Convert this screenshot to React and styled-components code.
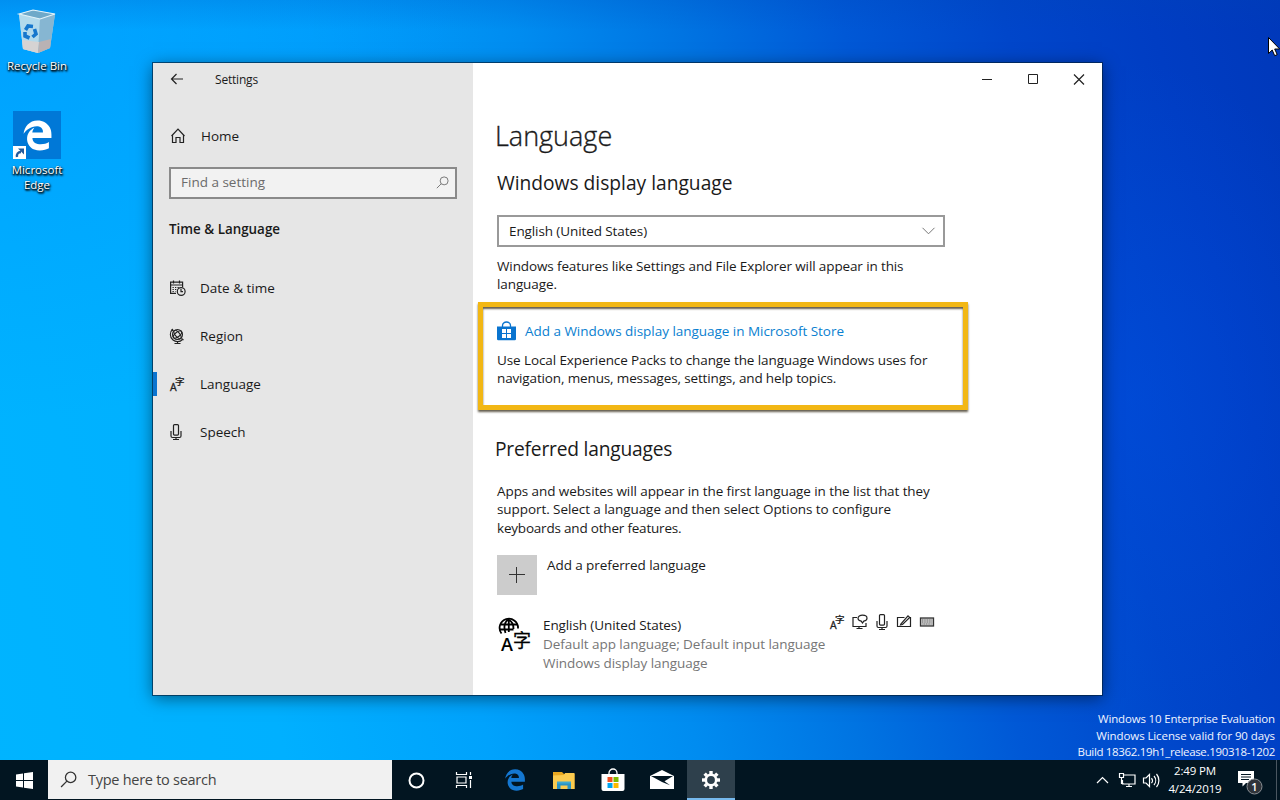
import React from 'react'
import styled, { createGlobalStyle } from 'styled-components'
import { FaEdgeLegacy } from 'react-icons/fa'

const GlobalStyle = createGlobalStyle`
  * {
    box-sizing: border-box;
  }

  body {
    margin: 0;
    overflow: hidden;
    font-family: 'Open Sans', 'Noto Sans', 'Noto Sans CJK SC', sans-serif;
    font-size: 13.5px;
    color: #1a1a1a;
  }

  h1, h2, h3, p {
    margin: 0;
    font-weight: 400;
  }

  svg {
    display: block;
    flex: none;
    overflow: visible;
  }
`

const Desktop = styled.div`
  position: relative;
  display: flex;
  flex-direction: column;
  width: 1280px;
  height: 800px;
  overflow: hidden;
  background:
    linear-gradient(180deg, rgba(0, 70, 180, 0.18) 0, rgba(0, 70, 180, 0) 30px),
    radial-gradient(ellipse 500px 420px at 0 0, rgba(0, 140, 255, 0.45), rgba(0, 140, 255, 0)),
    radial-gradient(ellipse 240px 340px at 1130px 400px, rgba(0, 82, 232, 0.4), rgba(0, 82, 232, 0)),
    linear-gradient(76deg, #00b4ff 0%, #00b0ff 20%, #00a2fc 34%, #008cf0 48%, #0074e2 59%, #0058d6 70%, #0046ca 81%, #003dc3 91%, #0038ba 100%);
`

const Shortcuts = styled.div`
  flex: 1;
  display: flex;
  flex-direction: column;
  align-items: flex-start;
`

const Shortcut = styled.div`
  display: flex;
  flex-direction: column;
  align-items: center;
  width: 74px;
  height: ${({ $height }) => $height}px;
  padding-top: ${({ $top }) => $top}px;
  color: #fff;
  font-size: 11.5px;
  line-height: 15px;
  text-align: center;
  text-shadow: 1px 1px 2px #000, 0 1px 2px #000, 1px 2px 2px rgba(0, 0, 0, 0.6);
`

const ShortcutLabel = styled.span`
  width: 64px;
  margin-top: ${({ $gap }) => $gap}px;
  white-space: ${({ $nowrap }) => ($nowrap ? 'nowrap' : 'normal')};
`

const EdgeTile = styled.div`
  position: relative;
  display: flex;
  align-items: center;
  justify-content: center;
  width: 48px;
  height: 48px;
  background: #0078d7;
  color: #fff;
`

const ShortcutArrow = styled.svg`
  position: absolute;
  left: 0;
  bottom: 0;
`

const Window = styled.div`
  position: absolute;
  left: 153px;
  top: 63px;
  display: grid;
  grid-template-columns: 320px 1fr;
  width: 949px;
  height: 632px;
  background: #fff;
  box-shadow: 0 0 0 1px rgba(0, 30, 60, 0.65), 0 3px 16px rgba(0, 0, 0, 0.5);
`

const Sidebar = styled.aside`
  background: #e6e6e6;
`

const TitleBar = styled.div`
  display: flex;
  align-items: center;
  justify-content: ${({ $end }) => ($end ? 'flex-end' : 'flex-start')};
  height: 33px;
  padding-left: ${({ $end }) => ($end ? 0 : 17)}px;
  font-size: 12px;
`

const TitleText = styled.span`
  margin-left: 31px;
  letter-spacing: -0.2px;
`

const CaptionButton = styled.div`
  display: flex;
  align-items: center;
  justify-content: center;
  width: 46px;
  height: 32px;
`

const HomeRow = styled.div`
  display: flex;
  align-items: center;
  gap: 14px;
  height: 48px;
  margin-top: 16px;
  padding-left: 17px;
`

const SearchBox = styled.div`
  display: flex;
  align-items: center;
  justify-content: space-between;
  width: 288px;
  height: 32px;
  margin: 7px 0 0 16px;
  padding: 0 6px 2px 10px;
  border: 2px solid #8a8a8a;
  background: #f2f2f2;
  color: #6b6b6b;
`

const SectionTitle = styled.h3`
  margin: 20px 0 25px 16px;
  font-size: 13.4px;
  font-weight: 600;
  line-height: 20px;
`

const NavItem = styled.div`
  display: flex;
  align-items: center;
  gap: 14px;
  height: 48px;
  padding-left: ${({ $active }) => ($active ? 12 : 16)}px;

  &::before {
    content: '';
    display: ${({ $active }) => ($active ? 'block' : 'none')};
    width: 4px;
    height: 24px;
    margin: 0 -2px 0 -12px;
    background: #0a74cf;
  }
`

const NavIcon = styled.span`
  width: 17px;
`

const Main = styled.main`
  display: flex;
  flex-direction: column;
`

const Content = styled.div`
  padding: 19px 0 0 24px;
`

const PageTitle = styled.h1`
  margin-left: -2px;
  font-size: 27px;
  font-weight: 300;
  line-height: 41px;
  -webkit-text-stroke: 0.35px #1a1a1a;
`

const Subtitle = styled.h2`
  margin: ${({ $margin }) => $margin};
  font-size: 19.2px;
  line-height: 28px;
  letter-spacing: ${({ $spacing }) => $spacing || 0}px;
`

const Select = styled.div`
  display: flex;
  align-items: center;
  justify-content: space-between;
  width: 448px;
  height: 32px;
  margin-bottom: 10px;
  padding: 0 8px 0 10px;
  border: 2px solid #999;
  letter-spacing: -0.1px;
`

const Line = styled.p`
  line-height: 18.4px;
  white-space: nowrap;
  letter-spacing: ${({ $spacing = -0.1 }) => $spacing}px;
`

const Highlight = styled.section`
  width: 490px;
  height: 108px;
  margin: 8px 0 0 -19px;
  padding: 14px 0 0 14px;
  border: 5px solid #f2b714;
  box-shadow: 0 2px 2px rgba(50, 40, 20, 0.75), inset 0 2px 2px rgba(50, 40, 20, 0.75);
`

const StoreLink = styled.div`
  display: flex;
  align-items: center;
  gap: 9px;
  height: 20px;
  margin-bottom: 10px;
  color: #0a80d0;
  letter-spacing: -0.03px;
`

const AddRow = styled.div`
  display: flex;
  gap: 10px;
  margin-top: 18px;
`

const AddTile = styled.div`
  display: flex;
  align-items: center;
  justify-content: center;
  width: 40px;
  height: 40px;
  background: #ccc;
`

const AddLabel = styled.span`
  padding-top: 1px;
  line-height: 19px;
  letter-spacing: -0.08px;
`

const LanguageRow = styled.div`
  display: flex;
  width: 438px;
  margin-top: 21px;
`

const LanguageText = styled.div`
  flex: 1;
  margin-left: 12px;
  line-height: 19px;
`

const LanguageName = styled.p`
  letter-spacing: -0.1px;
`

const LanguageNote = styled.p`
  color: #767676;
  white-space: nowrap;
  letter-spacing: -0.05px;
`

const Features = styled.div`
  display: flex;
  gap: 7px;
  width: 0;
  height: 16px;
  justify-content: flex-end;
  margin-top: -2px;
`

const Watermark = styled.div`
  position: absolute;
  right: 5px;
  top: 711px;
  color: #f0f4ff;
  font-size: 11.5px;
  line-height: 16.5px;
  text-align: right;
  white-space: nowrap;
`

const WatermarkLine = styled.div`
  letter-spacing: ${({ $spacing }) => $spacing}px;
`

const Taskbar = styled.footer`
  position: relative;
  display: flex;
  height: 40px;
  background: #021521;
`

const TaskButton = styled.div`
  display: flex;
  align-items: center;
  justify-content: center;
  width: 48px;
  height: 40px;
  margin-left: ${({ $gap }) => $gap || 0}px;
  background: ${({ $active }) => ($active ? '#2e404c' : 'transparent')};
  border-bottom: ${({ $active }) => ($active ? '2px solid #76b9ed' : '0')};
  padding-top: ${({ $active }) => ($active ? 2 : 0)}px;
`

const TaskSearch = styled.div`
  display: flex;
  align-items: center;
  gap: 11px;
  width: 344px;
  height: 39px;
  padding-left: 12px;
  background: #f1f1f1;
  color: #444;
  font-size: 14.5px;
  letter-spacing: -0.27px;
`

const Tray = styled.div`
  display: flex;
  align-items: center;
  margin-left: auto;
  color: #fff;
`

const Clock = styled.div`
  width: 62px;
  margin: 0 11px 0 0;
  font-size: 11.5px;
  line-height: 18px;
  letter-spacing: -0.15px;
  text-align: center;
  white-space: nowrap;
`

const ShowDesktop = styled.div`
  width: 4px;
  height: 40px;
  margin-left: 13px;
  border-left: 1px solid #4a5660;
`

const Cursor = styled.svg`
  position: absolute;
  left: 1268px;
  top: 37px;
`

const RecycleBin = () => (
  <svg width="42" height="46" viewBox="0 0 42 46">
    <path d="M3 5 17 1 39 5 34 39 22 44 7 40z" fill="#a9cfe2" />
    <path d="M3 5 24 10 22 44 7 40z" fill="#b3daec" />
    <path d="M24 10 39 5 34 39 22 44z" fill="#86b6d2" />
    <path d="M3 5 17 1 39 5 24 10z" fill="#6fa9c9" />
    <path d="M6 31 23 33 22 44 7 40z" fill="#d6d3d3" />
    <path d="M23 33 35 30 34 39 22 44z" fill="#b9b2b4" />
    <path d="M3 5 17 1 39 5 24 10z" fill="none" stroke="#e3f3fa" strokeWidth="1.2" />
    <g fill="none" stroke="#1677cd" strokeWidth="3.6">
      <path d="M9.500 21l2.500-4 5 .5" />
      <path d="M18.500 20l1.500 5-3.500 3" />
      <path d="M13.500 29l-4.500-2 0-4" />
    </g>
  </svg>
)

const BackIcon = () => (
  <svg width="14" height="14" viewBox="0 0 14 14" fill="none" stroke="#222" strokeWidth="1.2">
    <path d="M13 6H1.500M6.500 1 1.500 6l5 5" />
  </svg>
)

const HomeIcon = () => (
  <svg width="17" height="16" viewBox="0 0 17 16" fill="none" stroke="#222" strokeWidth="1.2">
    <path d="M1.500 8 8 1.200 14.500 8M2.500 7v7.500h3.500V9.500h4v5h3.500V7" />
  </svg>
)

const SearchIcon = ({ size, color }) => (
  <svg width={size} height={size} viewBox="0 0 16 16" fill="none" stroke={color} strokeWidth="1.2">
    <circle cx="10" cy="6" r="4.900" />
    <path d="M6.500 9.500 1 15" />
  </svg>
)

const DateIcon = () => (
  <svg width="17" height="17" viewBox="0 0 17 17" fill="none" stroke="#222" strokeWidth="1.200">
    <path d="M7 13.400H1.600V2.100h12V7M1.500 5h12M4.500 .5v3M10.500 .5v3" />
    <path d="M3.500 7.500h7M3.500 9.500h4M3.500 11.500h3" strokeDasharray="1.300 1.200" />
    <circle cx="12.200" cy="11.500" r="3.900" />
    <path d="M12 9v2.700h2" />
  </svg>
)

const RegionIcon = () => (
  <svg width="16" height="17" viewBox="0 0 16 17" fill="none" stroke="#222" strokeWidth="1.100">
    <circle cx="8.500" cy="6.500" r="5" />
    <ellipse cx="8.500" cy="6.500" rx="2.300" ry="5" transform="rotate(-40 8.500 6.500)" />
    <ellipse cx="8.500" cy="6.500" rx="2.300" ry="5" transform="rotate(50 8.500 6.500)" />
    <path d="M4 1A7 7 0 0 0 4 12 7 7 0 0 0 13.500 11.500M8.500 13.500v2M5.500 15.500h6" />
    <path d="M2.500 1.500l2 1.500M12.500 10.500l2 1.500" />
  </svg>
)

const LanguageIcon = () => (
  <svg width="16" height="16" viewBox="0 0 16 16" fill="#222">
    <text x="1" y="14.500" fontSize="10.500" fontFamily="Open Sans" fontWeight="400" stroke="#222" strokeWidth=".3">A</text>
    <text x="6" y="8.600" fontSize="9.500" fontFamily="Noto Sans CJK SC" fontWeight="500" stroke="#222" strokeWidth=".2">字</text>
  </svg>
)

const MicIcon = () => (
  <svg width="14" height="17" viewBox="0 0 14 17" fill="none" stroke="#222" strokeWidth="1.200">
    <rect x="4.500" y=".6" width="5" height="10.500" rx="1" />
    <path d="M2 7v5a1.500 1.500 0 0 0 1.500 1.500h7a1.500 1.500 0 0 0 1.500-1.500v-5M7 13.500v2M4 15.500h6" />
  </svg>
)

const DisplayIcon = () => (
  <svg width="16" height="16" viewBox="0 0 16 16" fill="none" stroke="#222" strokeWidth="1.200">
    <path d="M5 3.500H1v9h13V9M7 12.500v2M4.500 14.500h6" />
    <path d="M10.500 1.200c2.500 0 4.500 1.200 4.500 3s-1.700 2.700-3.200 2.900L10.500 9 9.200 7.100C7.500 6.800 6 5.800 6 4.200s2-3 4.500-3z" />
  </svg>
)

const PenIcon = () => (
  <svg width="16" height="16" viewBox="0 0 16 16" fill="none" stroke="#222" strokeWidth="1.200">
    <path d="M8.500 3.500h-7v9h13v-9h-1" />
    <path d="M5 9.800 12 1.800l1.700 1.600L6.500 10.500l-2 .5z" />
  </svg>
)

const KeyboardIcon = () => (
  <svg width="16" height="16" viewBox="0 0 16 16" fill="none" stroke="#333" strokeWidth="1.300">
    <rect x="1.500" y="4" width="13" height="8" fill="#ccc" />
    <path d="M3 6h10M3 8h10M3.500 10h9" strokeWidth="1" strokeDasharray="1 .7" stroke="#666" />
  </svg>
)

const StoreIcon = () => (
  <svg width="19" height="20" viewBox="0 0 19 20">
    <path d="M5.500 6V4.500a4 3.500 0 0 1 8 0V6" fill="none" stroke="#0a74cf" strokeWidth="1.300" />
    <path d="M0 5.500h19V18a1.200 1.200 0 0 1-1.200 1.200H1.200A1.200 1.200 0 0 1 0 18z" fill="#0a74cf" />
    <path d="M5 8h4v4H5zM10 8h4v4h-4zM5 13h4v4H5zM10 13h4v4h-4z" fill="#fff" />
  </svg>
)

const GlobeLanguageIcon = () => (
  <svg width="34" height="35" viewBox="0 0 34 35">
    <g fill="none" stroke="#000" strokeWidth="1.800">
      <path d="M4.500 17.500A9.200 9.200 0 1 1 21 12.500" />
      <path d="M8.500 17c-2-6-1-11 3-13.500 4 2 5 5 5 9.500M11.800 3.500V16M4 8.500h16M2.500 13.500h14" />
    </g>
    <text x="4" y="35" fontSize="18" fontFamily="Open Sans" fontWeight="600">A</text>
    <text x="16" y="30.500" fontSize="18" fontFamily="Noto Sans CJK SC" fontWeight="400" stroke="#000" strokeWidth=".3">字</text>
  </svg>
)

const WindowsLogo = () => (
  <svg width="17" height="17" viewBox="0 0 17 17" fill="#fff">
    <path d="M0 2.400 7 1.400V8H0zM8 1.300 17 0v8H8zM0 9h7v6.600L0 14.600zM8 9h9v8l-9-1.300z" />
  </svg>
)

const TaskViewIcon = () => (
  <svg width="18" height="18" viewBox="0 0 18 18" fill="none" stroke="#fff" strokeWidth="1.200">
    <path d="M1.500 1v2.500h10V1M1.500 17v-2.500h10V17M2 6h9v6H2zM15.500 1v3M15.500 9v8" />
    <path d="M14 5h3v3h-3z" fill="#fff" stroke="none" />
  </svg>
)

const FolderIcon = () => (
  <svg width="22" height="19" viewBox="0 0 22 19">
    <path d="M0 1h9l2 2h10.500V18H0z" fill="#e9a820" />
    <path d="M0 4.500 11 4l1-2h9.500v16H0z" fill="#fbcb4f" />
    <path d="M4 18v-7h14v7h-3.500v-3.500h-7V18z" fill="#2b93c3" />
    <path d="M4 10.500h14v2H4z" fill="#3fa9d0" />
  </svg>
)

const StoreTaskIcon = () => (
  <svg width="24" height="24" viewBox="0 0 24 24">
    <path d="M8 7V5a4 4 0 0 1 8 0v2" fill="none" stroke="#fff" strokeWidth="1.300" />
    <path d="M.5 6h23v15a2 2 0 0 1-2 2h-19a2 2 0 0 1-2-2z" fill="#fff" />
    <path d="M6.500 9h5v5h-5z" fill="#f25022" />
    <path d="M12.500 9h5v5h-5z" fill="#7fba00" />
    <path d="M6.500 15h5v5h-5z" fill="#00a4ef" />
    <path d="M12.500 15h5v5h-5z" fill="#ffb900" />
  </svg>
)

const MailIcon = () => (
  <svg width="24" height="20" viewBox="0 0 24 20">
    <path d="M0 6 12 0l12 6v13H0z" fill="#fff" />
    <path d="M1 6h22l-8.500 5.200 5.500 4L12 12z" fill="#021521" />
  </svg>
)

const GearIcon = () => (
  <svg width="20" height="20" viewBox="0 0 20 20" fill="none" stroke="#fff">
    <circle cx="10" cy="10" r="5.200" strokeWidth="2.600" />
    {[0, 45, 90, 135, 180, 225, 270, 315].map((angle) => (
      <path key={angle} d="M10 4V1" strokeWidth="3.4" transform={`rotate(${angle} 10 10)`} />
    ))}
  </svg>
)

const TrayIcons = () => (
  <svg width="68" height="18" viewBox="0 0 68 18" fill="none" stroke="#fff" strokeWidth="1.200">
    <path d="M1 12l5.500-5.500L12 12" />
    <path d="M28 4h11v9H26.500v-4M30 15.500h6M33 13v2.500M23.500 2.500h4v4h-4zM25.500 6.500v6h2" />
    <path d="M47.500 7h2.500l3.500-3.500v12L50 12h-2.500z" />
    <path d="M55.500 7a4 4 0 0 1 0 5M58 5a7 7 0 0 1 0 9M60.500 3a10 10 0 0 1 0 13" />
  </svg>
)

const ActionCenterIcon = () => (
  <svg width="26" height="26" viewBox="0 0 26 26">
    <path d="M1 4h16v12H9l-3.500 3.500V16H1z" fill="#fff" />
    <path d="M4 7.500h10M4 10h10M4 12.500h8" stroke="#021521" strokeWidth="1.200" />
    <circle cx="17.500" cy="19.500" r="7.500" fill="#30343a" stroke="#8a8f94" />
    <text x="17.500" y="23.500" textAnchor="middle" fontSize="11" fontWeight="600" fill="#fff">1</text>
  </svg>
)

const navItems = [
  { label: 'Date & time', icon: <DateIcon /> },
  { label: 'Region', icon: <RegionIcon /> },
  { label: 'Language', icon: <LanguageIcon />, active: true },
  { label: 'Speech', icon: <MicIcon /> },
]

const App = () => {
  return (
    <>
      <GlobalStyle />
      <Desktop>
        <Shortcuts>
          <Shortcut $height={111} $top={9}>
            <RecycleBin />
            <ShortcutLabel $gap={3} $nowrap>Recycle Bin</ShortcutLabel>
          </Shortcut>
          <Shortcut $height={90} $top={0}>
            <EdgeTile>
              <FaEdgeLegacy size={31} />
              <ShortcutArrow width="13" height="13" viewBox="0 0 13 13">
                <path d="M0 0h13v13H0z" fill="#fff" />
                <path d="M4 11c-.5-3 1-5 4-5" fill="none" stroke="#235a9c" strokeWidth="2.400" />
                <path d="M5 2.500h6v6z" fill="#235a9c" />
              </ShortcutArrow>
            </EdgeTile>
            <ShortcutLabel $gap={3}>Microsoft Edge</ShortcutLabel>
          </Shortcut>
        </Shortcuts>

        <Window>
          <Sidebar>
            <TitleBar>
              <BackIcon />
              <TitleText>Settings</TitleText>
            </TitleBar>
            <HomeRow>
              <HomeIcon />
              <span>Home</span>
            </HomeRow>
            <SearchBox>
              <span>Find a setting</span>
              <SearchIcon size={13} color="#777" />
            </SearchBox>
            <SectionTitle>Time &amp; Language</SectionTitle>
            {navItems.map(({ label, icon, active }) => (
              <NavItem key={label} $active={active}>
                <NavIcon>{icon}</NavIcon>
                <span>{label}</span>
              </NavItem>
            ))}
          </Sidebar>

          <Main>
            <TitleBar $end>
              <CaptionButton>
                <svg width="11" height="11" stroke="#222"><path d="M0 5.500h10" /></svg>
              </CaptionButton>
              <CaptionButton>
                <svg width="11" height="11" fill="none" stroke="#222"><path d="M.5 .5h9v9h-9z" /></svg>
              </CaptionButton>
              <CaptionButton>
                <svg width="11" height="11" stroke="#222" strokeWidth="1.200"><path d="M0 .5l10 10M10 .5l-10 10" /></svg>
              </CaptionButton>
            </TitleBar>
            <Content>
              <PageTitle>Language</PageTitle>
              <Subtitle $margin="13px 0 18px">Windows display language</Subtitle>
              <Select>
                <span>English (United States)</span>
                <svg width="13" height="8" fill="none" stroke="#777"><path d="M.5 .8 6.500 6.800l6-6" /></svg>
              </Select>
              <Line $spacing={-0.12}>Windows features like Settings and File Explorer will appear in this</Line>
              <Line>language.</Line>

              <Highlight>
                <StoreLink>
                  <StoreIcon />
                  <span>Add a Windows display language in Microsoft Store</span>
                </StoreLink>
                <Line>Use Local Experience Packs to change the language Windows uses for</Line>
                <Line $spacing={-0.14}>navigation, menus, messages, settings, and help topics.</Line>
              </Highlight>

              <Subtitle $margin="25px 0 19px -2px" $spacing={-0.2}>Preferred languages</Subtitle>
              <Line $spacing={-0.085}>Apps and websites will appear in the first language in the list that they</Line>
              <Line $spacing={-0.07}>support. Select a language and then select Options to configure</Line>
              <Line $spacing={-0.2}>keyboards and other features.</Line>

              <AddRow>
                <AddTile>
                  <svg width="16" height="16" stroke="#333"><path d="M0 7.500h16M7.500 0v16" /></svg>
                </AddTile>
                <AddLabel>Add a preferred language</AddLabel>
              </AddRow>

              <LanguageRow>
                <GlobeLanguageIcon />
                <LanguageText>
                  <LanguageName>English (United States)</LanguageName>
                  <LanguageNote>Default app language; Default input language</LanguageNote>
                  <LanguageNote>Windows display language</LanguageNote>
                </LanguageText>
                <Features>
                  <LanguageIcon />
                  <DisplayIcon />
                  <MicIcon />
                  <PenIcon />
                  <KeyboardIcon />
                </Features>
              </LanguageRow>
            </Content>
          </Main>
        </Window>

        <Watermark>
          <WatermarkLine $spacing={-0.16}>Windows 10 Enterprise Evaluation</WatermarkLine>
          <WatermarkLine $spacing={-0.1}>Windows License valid for 90 days</WatermarkLine>
          <WatermarkLine $spacing={-0.33}>Build 18362.19h1_release.190318-1202</WatermarkLine>
        </Watermark>

        <Taskbar>
          <TaskButton>
            <WindowsLogo />
          </TaskButton>
          <TaskSearch>
            <SearchIcon size={17} color="#333" />
            <span>Type here to search</span>
          </TaskSearch>
          <TaskButton>
            <svg width="17" height="17" fill="none" stroke="#fff" strokeWidth="2"><circle cx="8.500" cy="8.500" r="7" /></svg>
          </TaskButton>
          <TaskButton><TaskViewIcon /></TaskButton>
          <TaskButton $gap={3}><FaEdgeLegacy size={22} color="#1477d1" /></TaskButton>
          <TaskButton $gap={1}><FolderIcon /></TaskButton>
          <TaskButton $gap={1}><StoreTaskIcon /></TaskButton>
          <TaskButton $gap={1}><MailIcon /></TaskButton>
          <TaskButton $gap={1} $active><GearIcon /></TaskButton>
          <Tray>
            <TrayIcons />
            <Clock>
              <div>2:49 PM</div>
              <div>4/24/2019</div>
            </Clock>
            <ActionCenterIcon />
            <ShowDesktop />
          </Tray>
        </Taskbar>

        <Cursor width="12" height="20" viewBox="0 0 12 20">
          <path d="M.5 .5v16l3.700-3.500 2.500 5.700 2.500-1.100-2.500-5.600h5z" fill="#fff" stroke="#000" />
        </Cursor>
      </Desktop>
    </>
  )
}

export default App
